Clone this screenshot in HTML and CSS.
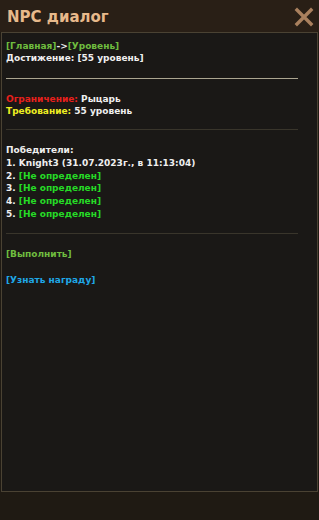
FILE: index.html
```html
<!DOCTYPE html>
<html lang="ru">

<head>
    <meta charset="UTF-8">
    <meta name="viewport" content="width=device-width, initial-scale=1.0">
    <title>NPC диалог</title>
    <link rel="stylesheet" href="styles.css">
</head>

<body>

    <div class="dialog">
        <div class="dialog_head">
            <div class="dialog_title">NPC диалог</div>
            <div class="dialog_close">
                <svg width="20" height="20" viewBox="0 0 20 20">
                    <path d="M3 3 L17 17 M17 3 L3 17" stroke="#a9805e" stroke-width="3.4" stroke-linecap="square" />
                </svg>
            </div>
        </div>

        <div class="dialog_body">
            <div class="block">
                <div><span class="link">[Главная]</span>-&gt;<span class="link">[Уровень]</span></div>
                <div>Достижение: [55 уровень]</div>
            </div>

            <div class="line light"></div>

            <div class="block">
                <div><span class="red">Ограничение:</span> Рыцарь</div>
                <div><span class="yellow">Требование:</span> 55 уровень</div>
            </div>

            <div class="line"></div>

            <div class="block winners">
                <div>Победители:</div>
                <div>1. Knight3 (31.07.2023г., в 11:13:04)</div>
                <div>2. <span class="green">[Не определен]</span></div>
                <div>3. <span class="green">[Не определен]</span></div>
                <div>4. <span class="green">[Не определен]</span></div>
                <div>5. <span class="green">[Не определен]</span></div>
            </div>

            <div class="line"></div>

            <div class="block actions">
                <div class="link">[Выполнить]</div>
                <div class="blue">[Узнать награду]</div>
            </div>
        </div>
    </div>

</body>

</html>
```

FILE: styles.css
```css
body {
    margin: 0;
    background: #1f1a13;
    font-family: "DejaVu Sans", Verdana, sans-serif;
}

.dialog {
    width: 319px;
    height: 520px;
}

.dialog_head {
    display: flex;
    align-items: center;
    justify-content: space-between;
    height: 32px;
    background: #291f16;
}

.dialog_title {
    padding-left: 7px;
    padding-top: 2px;
    font-size: 15px;
    font-weight: bold;
    color: #e7b98b;
}

.dialog_close {
    display: flex;
    padding-right: 5px;
    padding-top: 1px;
}

.dialog_body {
    margin: 0 1px;
    height: 451px;
    padding: 7px 4px 0;
    background: #1a1816;
    border: 1px solid #4a4233;
    font-size: 9px;
    font-weight: bold;
    line-height: 12px;
    color: #efefef;
}

.line {
    width: 292px;
    height: 1px;
    background: #39352b;
    margin: 12px 0 14px;
}

.line.light {
    background: #aba590;
    margin: 14px 0 14px;
}

.winners div {
    line-height: 12.8px;
}

.actions div + div {
    margin-top: 14px;
}

.link {
    color: #6fbd3f;
}

.green {
    color: #26db26;
}

.red {
    color: #e8201c;
}

.yellow {
    color: #eeee22;
}

.blue {
    color: #1fa7e6;
}
```
